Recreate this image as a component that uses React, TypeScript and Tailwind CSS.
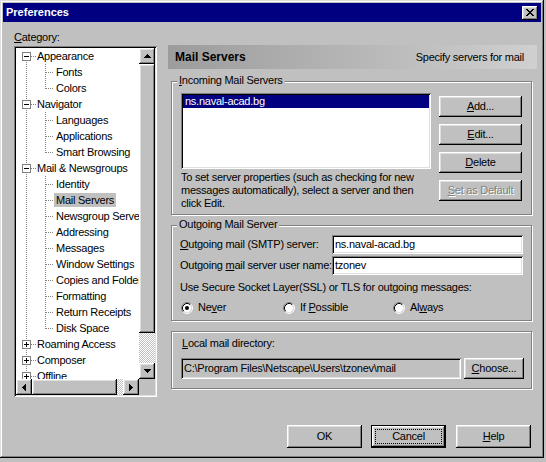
import React from 'react';

const raised = 'shadow-[inset_-1px_-1px_#000,inset_1px_1px_#fff,inset_-2px_-2px_#808080,inset_2px_2px_#dfdfdf]';
const sunken = 'shadow-[inset_1px_1px_#808080,inset_-1px_-1px_#fff,inset_2px_2px_#000,inset_-2px_-2px_#dfdfdf]';
const checker = 'bg-[image:repeating-conic-gradient(#c0c0c0_0_25%,#ffffff_0_50%)] bg-[length:2px_2px]';
const etched = 'border border-[#808080] shadow-[inset_1px_1px_#fff,1px_1px_#fff]';

type Row = { label: string; level: 0 | 1; open?: boolean; first?: boolean; lastChild?: boolean; selected?: boolean };

const tree: { label: string; open: boolean; children?: string[] }[] = [
  { label: 'Appearance', open: true, children: ['Fonts', 'Colors'] },
  { label: 'Navigator', open: true, children: ['Languages', 'Applications', 'Smart Browsing'] },
  {
    label: 'Mail & Newsgroups',
    open: true,
    children: [
      'Identity',
      'Mail Servers',
      'Newsgroup Servers',
      'Addressing',
      'Messages',
      'Window Settings',
      'Copies and Folders',
      'Formatting',
      'Return Receipts',
      'Disk Space',
    ],
  },
  { label: 'Roaming Access', open: false },
  { label: 'Composer', open: false },
  { label: 'Offline', open: false },
  { label: 'Advanced', open: false },
];

const rows: Row[] = [];
tree.forEach((g, i) => {
  rows.push({ label: g.label, level: 0, open: g.open, first: i === 0 });
  (g.children || []).forEach((c, j, arr) =>
    rows.push({ label: c, level: 1, lastChild: j === arr.length - 1, selected: c === 'Mail Servers' })
  );
});

const K = ({ c }: { c: string }) => <span className="underline underline-offset-[1px]">{c}</span>;

const dot = { stroke: '#808080', strokeDasharray: '1 1' };

function TreeRow({ row }: { row: Row }) {
  if (row.level === 0) {
    return (
      <div className="flex h-4 items-center whitespace-nowrap">
        <svg width="21" height="16" className="shrink-0" shapeRendering="crispEdges">
          <line x1="10.5" y1={row.first ? 12 : 0} x2="10.5" y2="16" {...dot} />
          <line x1="15" y1="8.5" x2="21" y2="8.5" {...dot} />
          <rect x="6.5" y="4.5" width="8" height="8" fill="#fff" stroke="#808080" />
          <path d="M8 8h5v1H8z" fill="#000" />
          {!row.open && <path d="M10 6h1v5h-1z" fill="#000" />}
        </svg>
        <span>{row.label}</span>
      </div>
    );
  }
  return (
    <div className="flex h-4 items-center whitespace-nowrap">
      <svg width="38" height="16" className="shrink-0" shapeRendering="crispEdges">
        <line x1="10.5" y1="0" x2="10.5" y2="16" {...dot} />
        <line x1="29.5" y1="0" x2="29.5" y2={row.lastChild ? 9 : 16} {...dot} />
        <line x1="30" y1="8.5" x2="38" y2="8.5" {...dot} />
      </svg>
      <span className={`h-[14px] px-[2px] leading-[14px] ${row.selected ? 'bg-[#c0c0c0]' : ''}`}>{row.label}</span>
    </div>
  );
}

function ArrowBtn({ d, w, h }: { d: string; w: number; h: number }) {
  return (
    <div className={`flex h-4 w-4 shrink-0 items-center justify-center bg-[#c0c0c0] ${raised}`}>
      <svg width={w} height={h} shapeRendering="crispEdges">
        <path d={d} fill="#000" />
      </svg>
    </div>
  );
}

function Button({
  children,
  className = '',
  disabled = false,
  focused = false,
}: {
  children: React.ReactNode;
  className?: string;
  disabled?: boolean;
  focused?: boolean;
}) {
  const text = disabled ? 'text-[#808080] [text-shadow:1px_1px_0_#fff]' : '';
  if (focused) {
    return (
      <div className={`border border-black ${className}`}>
        <div className={`relative flex h-full w-full items-center justify-center bg-[#c0c0c0] ${raised}`}>
          <span className="absolute inset-[3px] border border-dotted border-black" />
          {children}
        </div>
      </div>
    );
  }
  return (
    <div className={`flex items-center justify-center bg-[#c0c0c0] ${raised} ${text} ${className}`}>{children}</div>
  );
}

function Radio({ checked }: { checked?: boolean }) {
  return (
    <svg width="12" height="12" className="shrink-0">
      <circle cx="6" cy="6" r="4.5" fill="#fff" />
      <path d="M2.11 9.89A5.5 5.5 0 0 1 9.89 2.11" stroke="#808080" fill="none" />
      <path d="M9.89 2.11A5.5 5.5 0 0 1 2.11 9.89" stroke="#fff" fill="none" />
      <path d="M2.82 9.18A4.5 4.5 0 0 1 9.18 2.82" stroke="#000" fill="none" />
      <path d="M9.18 2.82A4.5 4.5 0 0 1 2.82 9.18" stroke="#dfdfdf" fill="none" />
      {checked && <circle cx="6" cy="6" r="2" fill="#000" />}
    </svg>
  );
}

function GroupBox({ label, className = '', children }: { label?: React.ReactNode; className?: string; children: React.ReactNode }) {
  return (
    <div className={`relative ml-[3px] w-[361px] ${etched} ${className}`}>
      {label && <span className="absolute -top-[8px] left-[5px] bg-[#c0c0c0] px-[2px]">{label}</span>}
      {children}
    </div>
  );
}

function Field({ value }: { value: string }) {
  return (
    <div className={`flex h-[19px] w-[191px] items-center bg-white pl-[3px] ${sunken}`}>{value}</div>
  );
}

export default function App() {
  return (
    <div className="h-[462px] w-[546px] bg-[#c0c0c0] font-['Liberation_Sans',Arial,sans-serif] text-[11px] leading-[13px] tracking-[-0.25px] text-black">
      <div className="flex h-[458px] w-[544px] flex-col bg-[#c0c0c0] p-[3px] shadow-[inset_-1px_-1px_#000,inset_1px_1px_#dfdfdf,inset_-2px_-2px_#808080,inset_2px_2px_#fff]">
        {/* title bar */}
        <div className="flex h-[19px] items-center justify-between bg-[#000080] pl-[3px] pr-[3px]">
          <span className="font-bold tracking-normal text-white">Preferences</span>
          <div className={`flex h-[14px] w-4 items-center justify-center bg-[#c0c0c0] ${raised}`}>
            <svg width="8" height="7" shapeRendering="crispEdges">
              <path
                d="M0 0h2v1H0zM6 0h2v1H6zM1 1h2v1H1zM5 1h2v1H5zM2 2h4v1H2zM3 3h2v1H3zM2 4h4v1H2zM1 5h2v1H1zM5 5h2v1H5zM0 6h2v1H0zM6 6h2v1H6z"
                fill="#000"
              />
            </svg>
          </div>
        </div>

        <div className="flex">
          {/* category tree */}
          <div className="ml-[11px] w-[143px] pt-[9px]">
            <p>
              <K c="C" />
              ategory:
            </p>
            <div className={`mt-[2px] h-[351px] bg-white p-[2px] ${sunken}`}>
              <div className="flex h-[331px]">
                <div className="w-[123px] overflow-hidden">
                  {rows.map((r) => (
                    <TreeRow key={r.label} row={r} />
                  ))}
                </div>
                <div className="flex w-4 flex-col">
                  <ArrowBtn w={7} h={4} d="M3 0h1v1h1v1h1v1h1v1H0V3h1V2h1V1h1z" />
                  <div className={`h-[269px] bg-[#c0c0c0] ${raised}`} />
                  <div className={`flex-1 ${checker}`} />
                  <ArrowBtn w={7} h={4} d="M0 0h7v1H6v1H5v1H4v1H3V3H2V2H1V1H0z" />
                </div>
              </div>
              <div className="flex h-4">
                <ArrowBtn w={4} h={7} d="M0 3h1V2h1V1h1V0h1v7H3V6H2V5H1V4H0z" />
                <div className={`w-[85px] bg-[#c0c0c0] ${raised}`} />
                <div className={`w-[6px] ${checker}`} />
                <ArrowBtn w={4} h={7} d="M0 0h1v1h1v1h1v1h1v1H3v1H2v1H1v1H0z" />
                <div className="w-4 bg-[#c0c0c0]" />
              </div>
            </div>
          </div>

          {/* settings panel */}
          <div className="ml-[11px] w-[369px] pt-[23px]">
            <div className="flex h-6 items-center justify-between bg-linear-to-r from-[#9c9c9c] to-[#d0d0d0] pl-[7px] pr-[13px]">
              <span className="text-[12px] font-bold tracking-normal">Mail Servers</span>
              <span>Specify servers for mail</span>
            </div>

            <GroupBox
              className="mt-[12px] h-[134px]"
              label={
                <>
                  <K c="I" />
                  ncoming Mail Servers
                </>
              }
            >
              <div className="flex pl-[9px] pt-[11px]">
                <div className="w-[250px]">
                  <div className={`h-[76px] bg-white p-[2px] ${sunken}`}>
                    <div className="h-[13px] bg-[#000080] pl-[2px] text-white">ns.naval-acad.bg</div>
                  </div>
                  <p className="mt-[2px] whitespace-nowrap">
                    To set server properties (such as checking for new
                    <br />
                    messages automatically), select a server and then
                    <br />
                    click Edit.
                  </p>
                </div>
                <div className="ml-[8px] flex flex-col gap-[7px] pt-[3px]">
                  <Button className="h-[21px] w-[83px]">
                    <K c="A" />
                    dd...
                  </Button>
                  <Button className="h-[21px] w-[83px]">
                    <K c="E" />
                    dit...
                  </Button>
                  <Button className="h-[21px] w-[83px]">
                    <K c="D" />
                    elete
                  </Button>
                  <Button className="h-[21px] w-[83px]" disabled>
                    <K c="S" />
                    et as Default
                  </Button>
                </div>
              </div>
            </GroupBox>

            <GroupBox className="mt-[10px] h-[96px]" label="Outgoing Mail Server">
              <div className="pl-[8px] pt-[9px]">
                <div className="flex h-[19px] items-center">
                  <span className="w-[152px] whitespace-nowrap">
                    <K c="O" />
                    utgoing mail (SMTP) server:
                  </span>
                  <Field value="ns.naval-acad.bg" />
                </div>
                <div className="mt-[2px] flex h-[19px] items-center">
                  <span className="w-[152px] whitespace-nowrap">
                    Outgoing <K c="m" />
                    ail server user name:
                  </span>
                  <Field value="tzonev" />
                </div>
                <p className="mt-[6px]">Use Secure Socket Layer(SSL) or TLS for outgoing messages:</p>
                <div className="mt-[7px] flex pl-[1px]">
                  <div className="flex w-[102px] items-center gap-[5px]">
                    <Radio checked />
                    <span>
                      Ne
                      <K c="v" />
                      er
                    </span>
                  </div>
                  <div className="flex w-[110px] items-center gap-[5px]">
                    <Radio />
                    <span>
                      If <K c="P" />
                      ossible
                    </span>
                  </div>
                  <div className="flex items-center gap-[5px]">
                    <Radio />
                    <span>
                      Al
                      <K c="w" />
                      ays
                    </span>
                  </div>
                </div>
              </div>
            </GroupBox>

            <GroupBox className="mt-[10px] h-[58px]">
              <div className="pl-[9px] pt-[5px]">
                <p className="pl-[1px]">
                  <K c="L" />
                  ocal mail directory:
                </p>
                <div className="mt-[8px] flex">
                  <div className={`flex h-[21px] w-[280px] items-center bg-[#c0c0c0] pl-[3px] ${sunken}`}>
                    {'C:\\Program Files\\Netscape\\Users\\tzonev\\mail'}
                  </div>
                  <Button className="ml-[3px] h-[21px] w-[60px]">
                    <K c="C" />
                    hoose...
                  </Button>
                </div>
              </div>
            </GroupBox>

            <div className="mt-[36px] flex justify-end pr-[6px]">
              <Button className="h-[23px] w-[75px]">OK</Button>
              <Button className="ml-[9px] h-[23px] w-[75px]" focused>
                Cancel
              </Button>
              <Button className="ml-[10px] h-[23px] w-[75px]">
                <K c="H" />
                elp
              </Button>
            </div>
          </div>
        </div>
      </div>
    </div>
  );
}
